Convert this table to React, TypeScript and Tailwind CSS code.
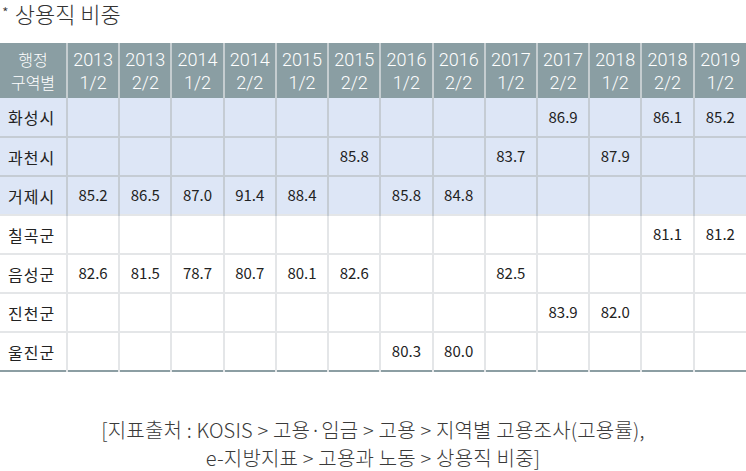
const periods = [
  ["2013", "1/2"],
  ["2013", "2/2"],
  ["2014", "1/2"],
  ["2014", "2/2"],
  ["2015", "1/2"],
  ["2015", "2/2"],
  ["2016", "1/2"],
  ["2016", "2/2"],
  ["2017", "1/2"],
  ["2017", "2/2"],
  ["2018", "1/2"],
  ["2018", "2/2"],
  ["2019", "1/2"],
]

const rows: { name: string; blue: boolean; values: string[] }[] = [
  { name: "화성시", blue: true, values: ["", "", "", "", "", "", "", "", "", "86.9", "", "86.1", "85.2"] },
  { name: "과천시", blue: true, values: ["", "", "", "", "", "85.8", "", "", "83.7", "", "87.9", "", ""] },
  { name: "거제시", blue: true, values: ["85.2", "86.5", "87.0", "91.4", "88.4", "", "85.8", "84.8", "", "", "", "", ""] },
  { name: "칠곡군", blue: false, values: ["", "", "", "", "", "", "", "", "", "", "", "81.1", "81.2"] },
  { name: "음성군", blue: false, values: ["82.6", "81.5", "78.7", "80.7", "80.1", "82.6", "", "", "82.5", "", "", "", ""] },
  { name: "진천군", blue: false, values: ["", "", "", "", "", "", "", "", "", "83.9", "82.0", "", ""] },
  { name: "울진군", blue: false, values: ["", "", "", "", "", "", "80.3", "80.0", "", "", "", "", ""] },
]

export default function App() {
  return (
    <div
      className="w-[746px] h-[471px] bg-white overflow-hidden text-[#222]"
      style={{ fontFamily: '"Noto Sans CJK KR", "Noto Sans", sans-serif' }}
    >
      {/* Title */}
      <div className="h-[43px] flex items-start gap-[6px] pl-[2px] text-[#333] font-light">
        <span className="text-[15px] leading-[26px]">*</span>
        <span className="text-[22px] leading-[26px]">상용직 비중</span>
      </div>

      {/* Table */}
      <table className="w-[746px] border-collapse table-fixed border-b-2 border-[#8c9ea3]">
        <colgroup>
          <col className="w-[67px]" />
          {periods.map((_, i) => (
            <col key={i} />
          ))}
        </colgroup>
        <thead>
          <tr className="h-[55px] bg-[#8a9ea3] text-white">
            <th className="font-light text-[16px] leading-[23px] border-r-2 border-[#c5cdd0]">
              행정
              <br />
              구역별
            </th>
            {periods.map(([y, h], i) => (
              <th
                key={i}
                className={`font-light text-[18px] leading-[23px] font-['Roboto',sans-serif] ${
                  i < periods.length - 1 ? "border-r-2 border-[#c5cdd0]" : ""
                }`}
              >
                {y}
                <br />
                {h}
              </th>
            ))}
          </tr>
        </thead>
        <tbody className="text-[15px]">
          {rows.map((row, r) => (
            <tr
              key={row.name}
              className={`h-[39px] ${row.blue ? "bg-[#dde6f6]" : "bg-white"} ${
                r === 0 ? "" : row.blue ? "border-t-2 border-[#c5ccd4]" : "border-t-2 border-[#e4e6e8]"
              }`}
            >
              <td
                className={`pl-[8px] text-[16px] tracking-[1px] ${
                  row.blue ? "border-r-2 border-[#c5ccd4]" : "border-r-2 border-[#e4e6e8]"
                }`}
              >
                {row.name}
              </td>
              {row.values.map((v, i) => (
                <td
                  key={i}
                  className={`text-center ${
                    i < row.values.length - 1
                      ? row.blue
                        ? "border-r-2 border-[#c5ccd4]"
                        : "border-r-2 border-[#e4e6e8]"
                      : ""
                  }`}
                >
                  {v}
                </td>
              ))}
            </tr>
          ))}
        </tbody>
      </table>

      {/* Source */}
      <div className="pt-[44px] text-center text-[20px] leading-[28px] text-[#3a3a3a] font-light tracking-[0.2px]">
        <div>[지표출처 : KOSIS &gt; 고용·임금 &gt; 고용 &gt; 지역별 고용조사(고용률),</div>
        <div>e-지방지표 &gt; 고용과 노동 &gt; 상용직 비중]</div>
      </div>
    </div>
  )
}
